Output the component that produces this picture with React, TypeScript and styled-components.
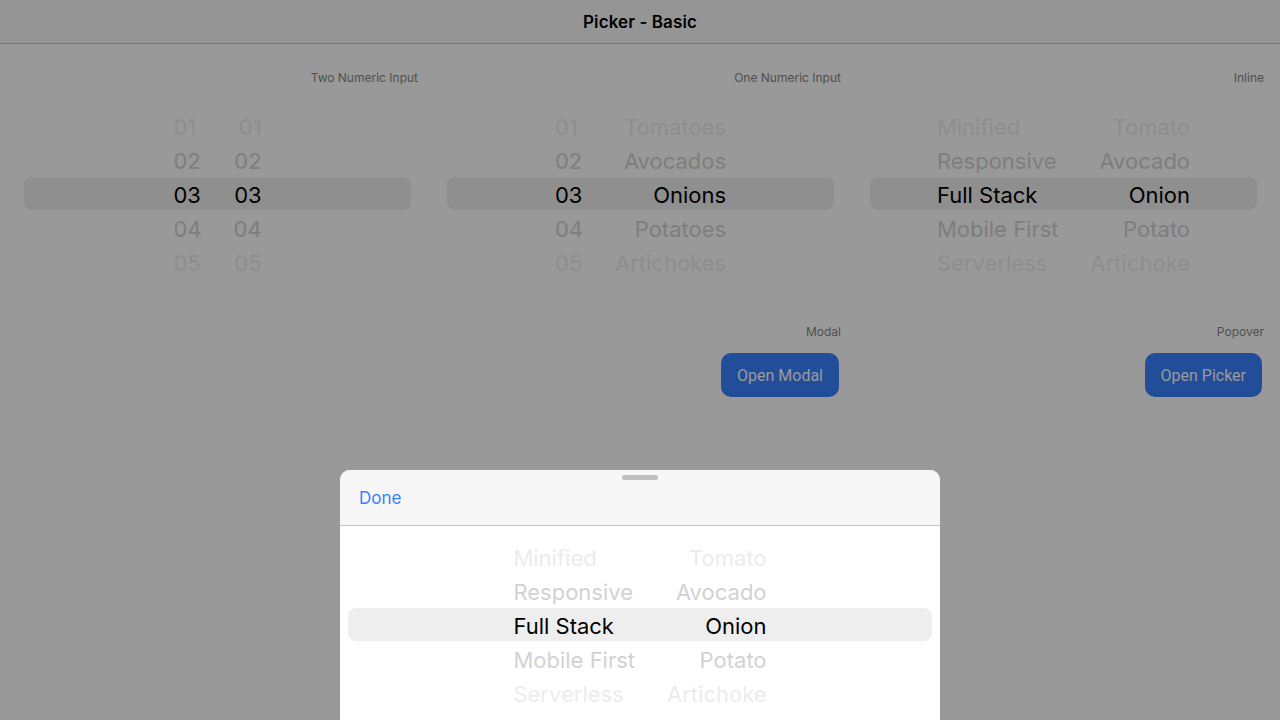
import React from 'react'
import styled, { createGlobalStyle } from 'styled-components'

const GlobalStyle = createGlobalStyle`
  html, body {
    margin: 0;
    padding: 0;
    background: #ffffff;
    font-family: Inter, Roboto, "Liberation Sans", sans-serif;
    -webkit-font-smoothing: antialiased;
  }
  * {
    box-sizing: border-box;
  }
`

type Align = 'left' | 'right'
type TColumn = { items: string[], align: Align }

const techs = ['Minified', 'Responsive', 'Full Stack', 'Mobile First', 'Serverless']
const foods = ['Tomato', 'Avocado', 'Onion', 'Potato', 'Artichoke']
const numbers = ['01', '02', '03', '04', '05']
const plurals = ['Tomatoes', 'Avocados', 'Onions', 'Potatoes', 'Artichokes']

const Page = styled.div`
  width: 1280px;
  height: 720px;
  overflow: hidden;
  background: #ffffff;
`
const Header = styled.header`
  display: flex;
  align-items: center;
  justify-content: center;
  height: 44px;
  background: #f8f8f8;
  border-bottom: 1px solid #c8c8c8;
`
const Title = styled.h1`
  margin: 0;
  font-size: 17px;
  font-weight: 600;
  letter-spacing: 0.1px;
  color: #000000;
`
const Grid = styled.main`
  display: grid;
  grid-template-columns: repeat(3, 402px);
  column-gap: 21px;
  row-gap: 30px;
  padding: 27px 16px 0;
`
const Cell = styled.section`
  display: flex;
  flex-direction: column;
  align-items: stretch;
`
const Label = styled.div`
  height: 14px;
  line-height: 14px;
  font-size: 12px;
  color: #868686;
  text-align: right;
`
const PickerWrap = styled.div`
  position: relative;
  height: 200px;
  margin: 10px 7px 0 8px;
  display: flex;
  justify-content: center;
  overflow: hidden;
`
const Highlight = styled.div`
  position: absolute;
  left: 0;
  right: 0;
  top: 82px;
  height: 33px;
  border-radius: 8px;
  background: #eeeeee;
`
const Column = styled.div<{ $align: Align }>`
  position: relative;
  display: flex;
  flex-direction: column;
  padding: 15px 16px 0;
  text-align: ${p => p.$align};
`
const Item = styled.div<{ $dist: number }>`
  height: 34px;
  line-height: 34px;
  font-size: 22px;
  white-space: nowrap;
  color: ${p => p.$dist === 0 ? '#000000' : p.$dist === 1 ? '#d2d2d2' : '#ececec'};
`
const ButtonRow = styled.div`
  display: flex;
  justify-content: flex-end;
  margin-top: 14px;
`
const Button = styled.button`
  height: 44px;
  padding: 0 16px;
  margin-right: 2px;
  border: none;
  border-radius: 10px;
  background: #3880ff;
  color: #ffffff;
  font-family: Roboto, "Liberation Sans", sans-serif;
  font-size: 16px;
  cursor: pointer;
`
const Backdrop = styled.div`
  position: fixed;
  inset: 0;
  background: rgba(0, 0, 0, 0.4);
`
const Sheet = styled.div`
  position: fixed;
  left: 340px;
  top: 470px;
  width: 600px;
  height: 260px;
  border-radius: 10px 10px 0 0;
  overflow: hidden;
  background: #ffffff;
`
const Handle = styled.div`
  position: absolute;
  top: 5px;
  left: 50%;
  width: 36px;
  height: 5px;
  margin-left: -18px;
  border-radius: 3px;
  background: #c0c0c0;
`
const SheetBar = styled.div`
  display: flex;
  align-items: center;
  height: 56px;
  padding: 0 19px;
  background: #f7f7f7;
  border-bottom: 1px solid #c6c6c6;
`
const Done = styled.span`
  font-size: 17px;
  color: #3880ff;
`
const SheetPicker = styled(PickerWrap)`
  margin: 0 8px;
`

const Columns = ({ columns }: { columns: TColumn[] }) => (
  <>
    <Highlight />
    {columns.map((col, ci) =>
      <Column key={ci} $align={col.align}>
        {col.items.map((it, i) => <Item key={i} $dist={Math.abs(i - 2)}>{it}</Item>)}
      </Column>
    )}
  </>
)

export default function App() {
  return (
    <Page>
      <GlobalStyle />
      <Header>
        <Title>Picker - Basic</Title>
      </Header>
      <Grid>
        <Cell>
          <Label>Two Numeric Input</Label>
          <PickerWrap>
            <Columns columns={[{ items: numbers, align: 'left' }, { items: numbers, align: 'right' }]} />
          </PickerWrap>
        </Cell>
        <Cell>
          <Label>One Numeric Input</Label>
          <PickerWrap>
            <Columns columns={[{ items: numbers, align: 'left' }, { items: plurals, align: 'right' }]} />
          </PickerWrap>
        </Cell>
        <Cell>
          <Label>Inline</Label>
          <PickerWrap>
            <Columns columns={[{ items: techs, align: 'left' }, { items: foods, align: 'right' }]} />
          </PickerWrap>
        </Cell>
        <Cell />
        <Cell>
          <Label>Modal</Label>
          <ButtonRow><Button>Open Modal</Button></ButtonRow>
        </Cell>
        <Cell>
          <Label>Popover</Label>
          <ButtonRow><Button>Open Picker</Button></ButtonRow>
        </Cell>
      </Grid>
      <Backdrop />
      <Sheet>
        <Handle />
        <SheetBar>
          <Done>Done</Done>
        </SheetBar>
        <SheetPicker>
          <Columns columns={[{ items: techs, align: 'left' }, { items: foods, align: 'right' }]} />
        </SheetPicker>
      </Sheet>
    </Page>
  )
}
